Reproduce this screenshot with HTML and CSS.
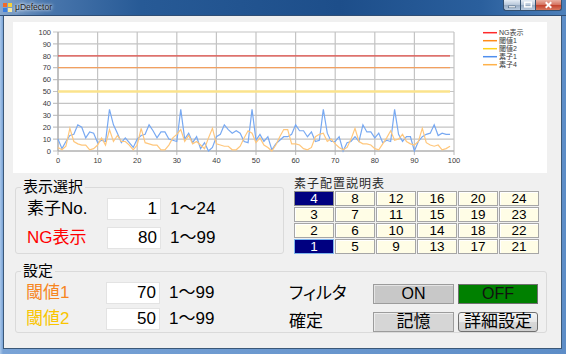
FILE: index.html
```html
<!DOCTYPE html>
<html lang="ja">
<head>
  <meta charset="UTF-8" />
  <meta name="viewport" content="width=device-width, initial-scale=1.0"/>
  <title>μDefector</title>
  <link rel="stylesheet" href="styles.css">
</head>
<body>

<div class="window">
  <div class="titlebar">
    <svg class="app-icon" viewBox="0 0 9 9">
      <rect x="0" y="0" width="4" height="4" fill="#f06a2a"/>
      <rect x="5" y="0" width="4" height="4" fill="#f7d23a"/>
      <rect x="0" y="5" width="4" height="4" fill="#3a7ee0"/>
      <rect x="5" y="5" width="4" height="4" fill="#f5e9a0"/>
    </svg>
    <span class="title">μDefector</span>
    <div class="caption-buttons">
      <span class="cap min"><svg viewBox="0 0 17 10"><rect x="5" y="6" width="7" height="2" fill="#fff" stroke="#34506f" stroke-width="0.5"/></svg></span>
      <span class="cap max"><svg viewBox="0 0 15 10"><rect x="4" y="2" width="7" height="5" fill="none" stroke="#fff" stroke-width="1.5"/></svg></span>
      <span class="cap close"><svg viewBox="0 0 27 10"><path d="M10.5 2 L16.5 8 M16.5 2 L10.5 8" stroke="#fff" stroke-width="2"/></svg></span>
    </div>
  </div>

  <div class="client">
    <div class="chart">
      <svg width="534" height="151" viewBox="13 22 534 151">
        <!-- grid -->
        <path class="grid" d="M53 32H454 M53 43.9H454 M53 55.8H454 M53 67.7H454 M53 79.6H454 M53 91.5H454 M53 103.4H454 M53 115.3H454 M53 127.2H454 M53 139.1H454 M53 151H454"/>
        <path class="grid" d="M58 32V155 M97.6 32V155 M137.2 32V155 M176.8 32V155 M216.4 32V155 M256 32V155 M295.6 32V155 M335.2 32V155 M374.8 32V155 M414.4 32V155 M454 32V155"/>
        <path class="axis" d="M58 32V151H454"/>

        <g class="ticks-y">
          <text x="51" y="34.7">100</text>
          <text x="51" y="46.6">90</text>
          <text x="51" y="58.5">80</text>
          <text x="51" y="70.4">70</text>
          <text x="51" y="82.3">60</text>
          <text x="51" y="94.2">50</text>
          <text x="51" y="106.1">40</text>
          <text x="51" y="118">30</text>
          <text x="51" y="129.9">20</text>
          <text x="51" y="141.8">10</text>
          <text x="51" y="153.7">0</text>
        </g>
        <g class="ticks-x">
          <text x="58" y="162.5">0</text>
          <text x="97.6" y="162.5">10</text>
          <text x="137.2" y="162.5">20</text>
          <text x="176.8" y="162.5">30</text>
          <text x="216.4" y="162.5">40</text>
          <text x="256" y="162.5">50</text>
          <text x="295.6" y="162.5">60</text>
          <text x="335.2" y="162.5">70</text>
          <text x="374.8" y="162.5">80</text>
          <text x="414.4" y="162.5">90</text>
          <text x="454" y="162.5">100</text>
        </g>

        <!-- series, in data units -->
        <g transform="translate(58 151) scale(3.96 -1.19)">
          <path class="s-ng" d="M0 80H99" vector-effect="non-scaling-stroke"/>
          <path class="s-th1" d="M0 70H99" vector-effect="non-scaling-stroke"/>
          <path class="s-th2" d="M0 50H99" vector-effect="non-scaling-stroke"/>
          <polyline class="s-e1" vector-effect="non-scaling-stroke" points="0,10 1,2 2,8 3,13 4,14 5,22 6,20 7,11 8,16 9,15 10,7 11,9 12,8 13,35 14,22 15,15 16,7 17,11 18,7 19,3 20,10 21,13 22,14 23,22 24,17 25,11 26,16 27,16 28,10 29,9 30,8 31,35 32,10 33,15 34,7 35,12 36,2 37,7 38,0 39,3 40,12 41,14 42,22 43,18 44,15 45,17 46,15 47,8 48,7 49,35 50,9 51,14 52,8 53,12 54,1 55,6 56,9 57,12 58,12 59,14 60,22 61,17 62,17 63,12 64,16 65,8 66,9 67,35 68,15 69,8 70,8 71,12 72,0 73,7 74,8 75,12 76,8 77,22 78,16 79,16 80,11 81,15 82,7 83,9 84,8 85,35 86,14 87,8 88,12 89,12 90,0 91,8 92,12 93,14 94,15 95,22 96,13 97,15 98,14 99,14"/>
          <polyline class="s-e4" vector-effect="non-scaling-stroke" points="0,3 1,1 2,4 3,19 4,8 5,6 6,5 7,5 8,1 9,2 10,5 11,11 12,5 13,18 14,8 15,13 16,8 17,8 18,5 19,1 20,5 21,19 22,7 23,6 24,5 25,5 26,1 27,1 28,5 29,11 30,14 31,18 32,8 33,13 34,6 35,8 36,5 37,2 38,11 39,19 40,6 41,5 42,4 43,4 44,1 45,1 46,4 47,11 48,17 49,15 50,7 51,11 52,5 53,3 54,0 55,5 56,12 57,18 58,18 59,6 60,6 61,5 62,2 63,1 64,3 65,12 66,14 67,15 68,8 69,10 70,6 71,3 72,1 73,3 74,10 75,19 76,8 77,6 78,6 79,5 80,2 81,1 82,6 83,11 84,17 85,9 86,10 87,14 88,8 89,6 90,5 91,8 92,19 93,7 94,5 95,4 96,5 97,1 98,2 99,4"/>
        </g>

        <!-- legend -->
        <g class="legend">
          <path d="M483 32.7H497" stroke="#ff2a2a"/>
          <text x="499" y="35.1">NG表示</text>
          <path d="M483 40.7H497" stroke="#ff8c1a"/>
          <text x="499" y="43.1">閾値1</text>
          <path d="M483 48.7H497" stroke="#ffd21a"/>
          <text x="499" y="51.1">閾値2</text>
          <path d="M483 56.7H497" stroke="#4f8fee"/>
          <text x="499" y="59.1">素子1</text>
          <path d="M483 64.7H497" stroke="#ffb24a"/>
          <text x="499" y="67.1">素子4</text>
        </g>
      </svg>
    </div>

    <div class="lower">
      <div class="top-row">
        <fieldset class="group view-select">
          <legend>表示選択</legend>
          <div class="rows">
            <div class="field-row">
              <span class="label">素子No.</span>
              <input class="num" type="text" value="1">
              <span class="range">1～24</span>
            </div>
            <div class="field-row">
              <span class="label ng">NG表示</span>
              <input class="num" type="text" value="80">
              <span class="range">1～99</span>
            </div>
          </div>
        </fieldset>

        <div class="layout-panel">
          <div class="panel-title">素子配置説明表</div>
          <div class="cell-grid">
            <span class="cell selected">4</span>
            <span class="cell">8</span>
            <span class="cell">12</span>
            <span class="cell">16</span>
            <span class="cell">20</span>
            <span class="cell">24</span>
            <span class="cell">3</span>
            <span class="cell">7</span>
            <span class="cell">11</span>
            <span class="cell">15</span>
            <span class="cell">19</span>
            <span class="cell">23</span>
            <span class="cell">2</span>
            <span class="cell">6</span>
            <span class="cell">10</span>
            <span class="cell">14</span>
            <span class="cell">18</span>
            <span class="cell">22</span>
            <span class="cell selected focus">1</span>
            <span class="cell">5</span>
            <span class="cell">9</span>
            <span class="cell">13</span>
            <span class="cell">17</span>
            <span class="cell">21</span>
          </div>
        </div>
      </div>

      <fieldset class="group settings">
        <legend>設定</legend>
        <div class="settings-body">
          <div class="settings-left">
            <div class="field-row">
              <span class="label th1">閾値1</span>
              <input class="num" type="text" value="70">
              <span class="range">1～99</span>
            </div>
            <div class="field-row">
              <span class="label th2">閾値2</span>
              <input class="num" type="text" value="50">
              <span class="range">1～99</span>
            </div>
          </div>
          <div class="settings-right">
            <div class="btn-row">
              <span class="label2">フィルタ</span>
              <button class="btn on">ON</button>
              <button class="btn off">OFF</button>
            </div>
            <div class="btn-row">
              <span class="label2">確定</span>
              <button class="btn flat">記憶</button>
              <button class="btn std">詳細設定</button>
            </div>
          </div>
        </div>
      </fieldset>
    </div>
  </div>
</div>

</body>
</html>
```

FILE: styles.css
```css
* {
  box-sizing: border-box;
}

body {
  margin: 0;
  background: #5f8fc8;
  font-family: "Liberation Sans", "Noto Sans CJK JP", sans-serif;
}

.window {
  width: 566px;
  height: 354px;
  display: flex;
  flex-direction: column;
  background: linear-gradient(to right, #a9c7ea 0, #79a3d6 3px, #5d8dc7 100%);
}

/* title bar */
.titlebar {
  height: 16px;
  display: flex;
  align-items: flex-start;
  background: linear-gradient(to right, #86a6cc 0%, #4a77ad 8%, #275a96 25%, #1d4e8a 60%, #2a5f9d 85%, #4d80ba 100%);
  border-bottom: 1px solid #2f4e75;
}

.app-icon {
  width: 9px;
  height: 9px;
  margin: 3px 0 0 3px;
}

.title {
  margin: 2px 0 0 3px;
  font-size: 8.5px;
  line-height: 11px;
  color: #1c1c1c;
  text-shadow: 0 0 3px #fff, 0 0 4px rgba(255,255,255,0.8);
}

.caption-buttons {
  margin-left: auto;
  margin-right: 4px;
  display: flex;
}

.cap {
  height: 11px;
  border: 1px solid #34506f;
  border-top: none;
  display: block;
}

.cap svg {
  display: block;
  width: 100%;
  height: 100%;
}

.cap.min {
  width: 17px;
  border-radius: 0 0 0 3px;
  border-right: none;
  background: linear-gradient(#e4ecf5, #b6c6d9 50%, #98abc2 51%, #b9cbe0);
}

.cap.max {
  width: 15px;
  border-right: none;
  background: linear-gradient(#e4ecf5, #b6c6d9 50%, #98abc2 51%, #b9cbe0);
}

.cap.close {
  width: 27px;
  border-radius: 0 0 3px 0;
  background: linear-gradient(#eab0a2, #d4705d 50%, #c2402b 51%, #d9785f);
}

/* client area */
.client {
  flex: 1;
  margin: 0 4px 5px 3px;
  background: #f0f0f0;
  border: 1px solid #3b5878;
  border-top: none;
}

.chart {
  margin: 6px 0 0 9px;
  width: 534px;
  height: 151px;
  background: #fff;
}

.chart svg {
  display: block;
}

.grid {
  stroke: #c4c4c4;
  stroke-width: 1.2;
  fill: none;
}

.axis {
  stroke: #a8a8a8;
  stroke-width: 1;
  fill: none;
}

.ticks-y text,
.ticks-x text {
  font-family: "Liberation Sans", sans-serif;
  font-size: 7.5px;
  fill: #3a3a3a;
}

.legend text {
  font-family: "Liberation Sans", "Noto Sans CJK JP", sans-serif;
  font-size: 7px;
  fill: #3a3a3a;
}

.ticks-y text {
  text-anchor: end;
}

.ticks-x text {
  text-anchor: middle;
}

.legend path {
  stroke-width: 1.5;
}

.s-ng, .s-th1, .s-th2, .s-e1, .s-e4 {
  fill: none;
}

.s-ng { stroke: #e4504a; stroke-width: 1.3; }
.s-th1 { stroke: #f2a060; stroke-width: 1.3; }
.s-th2 { stroke: #fbe38c; stroke-width: 2.5; }
.s-e1 { stroke: #78a9f2; stroke-width: 1.2; }
.s-e4 { stroke: #ffc77c; stroke-width: 1.2; }

/* lower controls */
.lower {
  padding-left: 11px;
}

.top-row {
  display: flex;
  align-items: flex-start;
}

.group {
  margin: 0;
  padding: 0 0 0 5px;
  border: 1px solid #dadada;
  border-radius: 3px;
  min-width: 0;
}

.group legend {
  padding: 0 2px;
  font-size: 15px;
  line-height: 16px;
  color: #000;
}

.view-select {
  margin-top: 6px;
  width: 269px;
  padding-bottom: 4px;
}

.rows {
  padding-top: 3px;
  display: flex;
  flex-direction: column;
  gap: 7px;
}

.field-row {
  display: flex;
  align-items: center;
  height: 22px;
  padding-left: 6px;
}

.label {
  width: 80px;
  font-size: 17px;
  line-height: 22px;
  color: #000;
}

.label.ng { color: #ff0000; }
.label.th1 { color: #f7861f; }
.label.th2 { color: #f9c500; }

.num {
  width: 54px;
  height: 22px;
  padding: 0 3px;
  border: 1px solid #e3e3e3;
  background: #fff;
  font-family: "Liberation Sans", sans-serif;
  font-size: 17px;
  text-align: right;
  color: #000;
  outline: none;
}

.range {
  margin-left: 9px;
  font-size: 17px;
  line-height: 22px;
  color: #000;
}

.layout-panel {
  margin: 4px 0 0 10px;
}

.panel-title {
  font-size: 12px;
  line-height: 14px;
  letter-spacing: 1px;
  color: #2a2a2a;
}

.cell-grid {
  display: grid;
  grid-template-columns: repeat(6, 40px);
  grid-auto-rows: 15px;
  gap: 1px;
}

.cell {
  background: #fffde6;
  border: 1px solid #a6a6a6;
  box-shadow: inset 1px 1px 0 #fff;
  font-size: 13.5px;
  line-height: 13px;
  text-align: center;
  color: #000;
}

.cell.selected {
  background: #000080;
  color: #fff;
  border-color: #8c8c8c;
  box-shadow: none;
}

.cell.focus {
  border-color: #7fb6ec;
}

.settings {
  margin-top: 9px;
  width: 532px;
}

.settings-body {
  display: flex;
}

.settings-left {
  width: 268px;
  padding-top: 3px;
  display: flex;
  flex-direction: column;
  gap: 4px;
}

.settings-left .field-row {
  padding-left: 5px;
}

.settings-right {
  padding-top: 5px;
  display: flex;
  flex-direction: column;
  gap: 8px;
}

.btn-row {
  display: flex;
  align-items: center;
  height: 20px;
}

.label2 {
  width: 84px;
  font-size: 17px;
  line-height: 20px;
  color: #000;
  font-feature-settings: "palt";
}

.btn {
  height: 20px;
  width: 81px;
  margin: 0 4px 0 0;
  padding: 0;
  border: 1px solid #9c9c9c;
  font-family: "Liberation Sans", "Noto Sans CJK JP", sans-serif;
  font-size: 16px;
  line-height: 18px;
  color: #000;
}

.btn.on {
  background: #c8c8c8;
  box-shadow: inset 1px 1px 0 #e4e4e4;
}

.btn.off {
  width: 80px;
  background: #008000;
  border-color: #707070;
  color: #111;
}

.btn.flat {
  background: #d6d6d6;
  box-shadow: inset 1px 1px 0 #ececec;
  font-size: 17px;
}

.btn.std {
  width: 80px;
  background: linear-gradient(#f4f4f4, #e8e8e8 50%, #d8d8d8 51%, #cfcfcf);
  border-color: #707070;
  border-radius: 3px;
  font-size: 17px;
}
```
